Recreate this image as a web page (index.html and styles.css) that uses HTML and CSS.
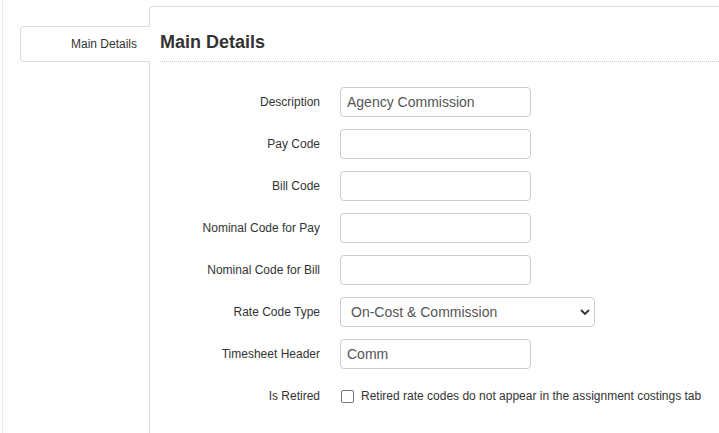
FILE: index.html
```html
<!DOCTYPE html>
<html>
<head>
<meta charset="utf-8">
<link rel="stylesheet" href="styles.css">
</head>
<body>
<div class="page">
  <div class="tabs">
    <div class="tab">Main Details</div>
  </div>
  <div class="panel">
    <h2 class="heading">Main Details</h2>
    <div class="form">
      <div class="row">
        <label class="label">Description</label>
        <input class="input" type="text" value="Agency Commission">
      </div>
      <div class="row">
        <label class="label">Pay Code</label>
        <input class="input" type="text" value="">
      </div>
      <div class="row">
        <label class="label">Bill Code</label>
        <input class="input" type="text" value="">
      </div>
      <div class="row">
        <label class="label">Nominal Code for Pay</label>
        <input class="input" type="text" value="">
      </div>
      <div class="row">
        <label class="label">Nominal Code for Bill</label>
        <input class="input" type="text" value="">
      </div>
      <div class="row">
        <label class="label">Rate Code Type</label>
        <div class="select-wrap">
          <select class="select">
            <option>On-Cost &amp; Commission</option>
          </select>
          <svg class="chevron" width="10" height="6" viewBox="0 0 10 6"><path d="M1 1 L5 5 L9 1" fill="none" stroke="#333" stroke-width="1.8"/></svg>
        </div>
      </div>
      <div class="row">
        <label class="label">Timesheet Header</label>
        <input class="input" type="text" value="Comm">
      </div>
      <div class="row">
        <label class="label">Is Retired</label>
        <label class="check">
          <input class="checkbox" type="checkbox">
          <span>Retired rate codes do not appear in the assignment costings tab</span>
        </label>
      </div>
    </div>
  </div>
</div>
</body>
</html>
```

FILE: styles.css
```css
* { box-sizing: border-box; }
html, body {
  margin: 0;
  padding: 0;
  background: #fff;
  overflow: hidden;
}
body {
  font-family: "Liberation Sans", Arial, sans-serif;
  color: #333;
  font-size: 12px;
}
.page {
  display: flex;
  margin-left: 2px;
  min-height: 100vh;
  border-left: 1px solid #ececec;
}
.tabs {
  width: 130px;
  margin-left: 17px;
  margin-right: -1px;
  padding-top: 26px;
  flex: none;
  position: relative;
  z-index: 1;
}
.tab {
  height: 36px;
  border: 1px solid #ddd;
  border-right: none;
  border-radius: 4px 0 0 4px;
  background: #fff;
  text-align: right;
  padding-right: 13px;
  line-height: 34px;
  font-size: 12px;
  color: #333;
}
.panel {
  flex: 1;
  margin-top: 6px;
  margin-right: -10px;
  border-top: 1px solid #ddd;
  border-left: 1px solid #ddd;
  border-top-left-radius: 4px;
  padding-left: 10px;
}
.heading {
  margin: 25px 0 0;
  font-size: 18px;
  line-height: 20px;
  font-weight: bold;
  color: #333;
  padding-bottom: 9px;
  border-bottom: 1px dotted #ccc;
}
.form {
  display: flex;
  flex-direction: column;
  gap: 12px;
  padding-top: 25px;
}
.row {
  display: flex;
  align-items: center;
  gap: 20px;
  height: 30px;
}
.label {
  width: 160px;
  text-align: right;
  font-size: 12px;
  color: #333;
  flex: none;
}
.input {
  width: 191px;
  height: 30px;
  border: 1px solid #ccc;
  border-radius: 4px;
  padding: 0 6px;
  font-family: "Liberation Sans", Arial, sans-serif;
  font-size: 14px;
  color: #555;
  background: #fff;
  outline: none;
}
.select-wrap {
  position: relative;
  width: 255px;
  height: 30px;
}
.select {
  appearance: none;
  -webkit-appearance: none;
  width: 100%;
  height: 30px;
  border: 1px solid #ccc;
  border-radius: 4px;
  padding: 0 10px;
  font-family: "Liberation Sans", Arial, sans-serif;
  font-size: 14px;
  color: #555;
  background: #fff;
  outline: none;
}
.chevron {
  position: absolute;
  right: 5px;
  top: 12px;
  pointer-events: none;
}
.check {
  display: flex;
  align-items: center;
  gap: 7px;
  font-size: 12px;
  color: #333;
}
.checkbox {
  appearance: none;
  -webkit-appearance: none;
  width: 13px;
  height: 13px;
  margin: 0 0 0 1px;
  border: 1px solid #767676;
  border-radius: 2px;
  background: #fff;
}
```
